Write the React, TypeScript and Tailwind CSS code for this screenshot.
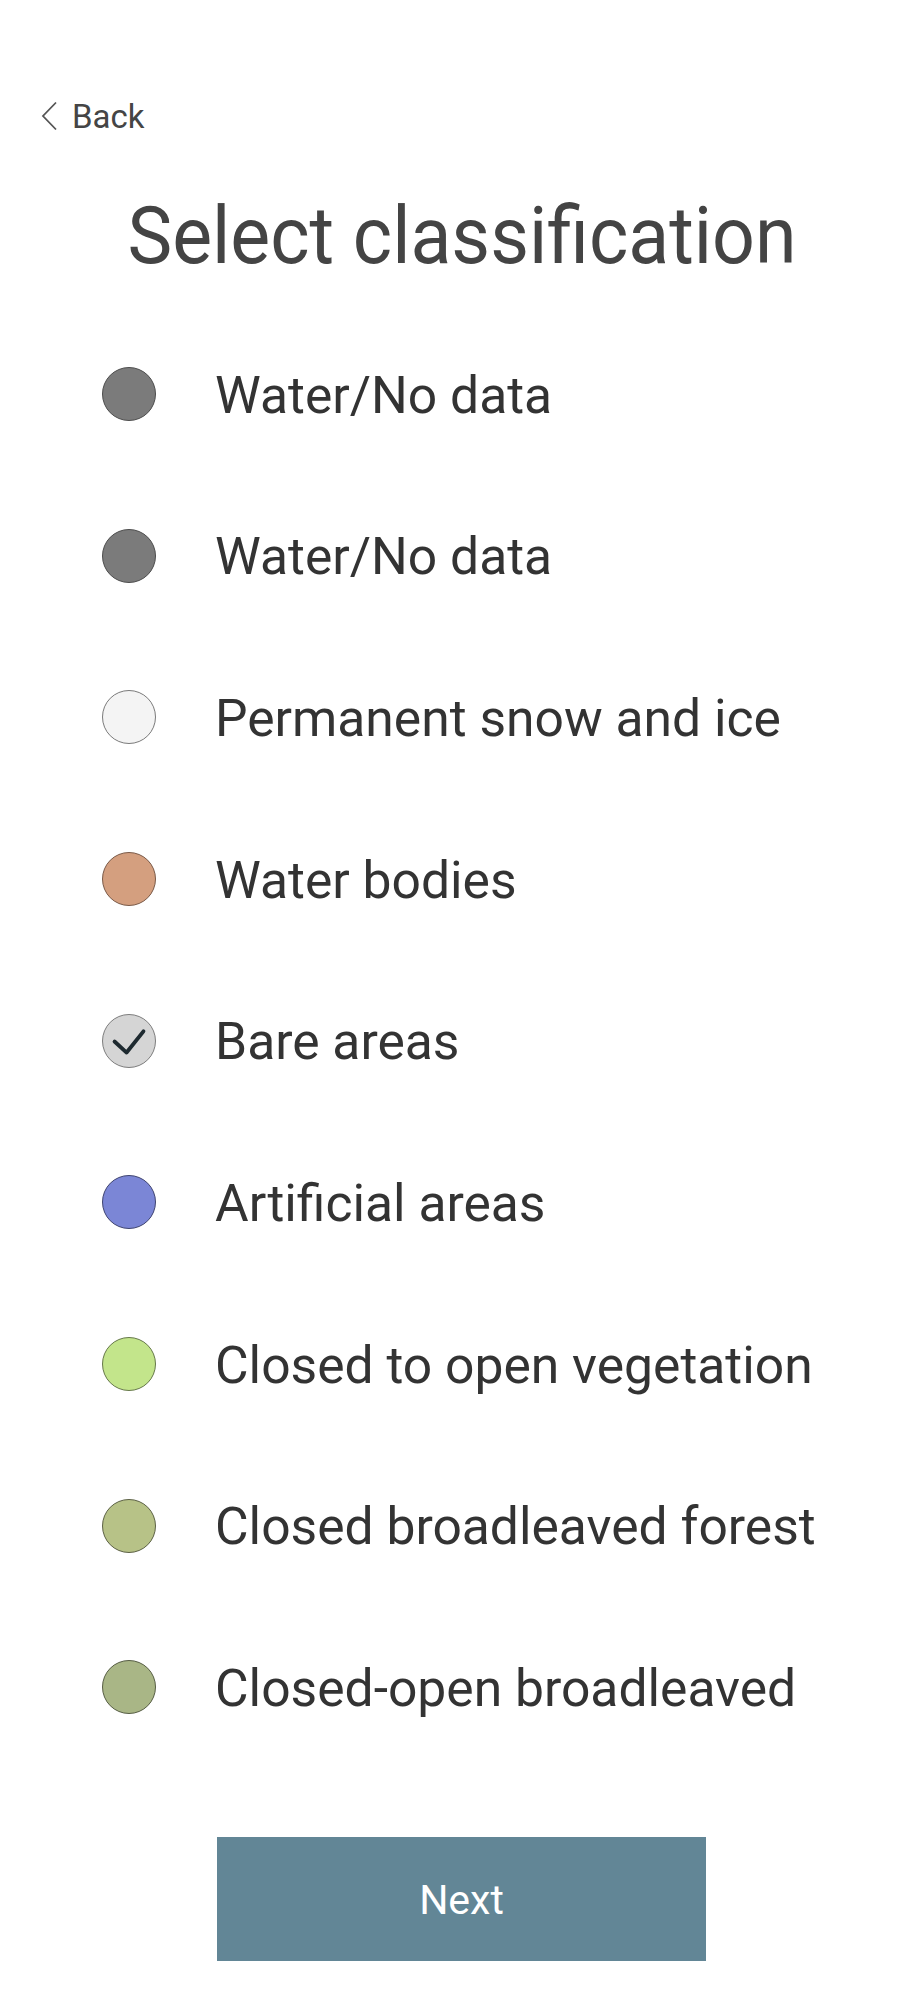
import { useState } from "react";

type Category = {
  id: string;
  label: string;
  fill: string;
  ring: string;
};

const categories: Category[] = [
  { id: "nodata-1", label: "Water/No data", fill: "bg-[#7b7b7b]", ring: "border-[#4d4d4d]" },
  { id: "nodata-2", label: "Water/No data", fill: "bg-[#7b7b7b]", ring: "border-[#4d4d4d]" },
  { id: "snow", label: "Permanent snow and ice", fill: "bg-[#f4f4f4]", ring: "border-[#7a7a7a]" },
  { id: "water", label: "Water bodies", fill: "bg-[#d49f7f]", ring: "border-[#7a5a48]" },
  { id: "bare", label: "Bare areas", fill: "bg-[#d5d5d5]", ring: "border-[#7d7d7d]" },
  { id: "artificial", label: "Artificial areas", fill: "bg-[#7b86d6]", ring: "border-[#3f4470]" },
  { id: "vegetation", label: "Closed to open vegetation", fill: "bg-[#c3e58b]", ring: "border-[#66784a]" },
  { id: "forest", label: "Closed broadleaved forest", fill: "bg-[#b7c287]", ring: "border-[#5c6145]" },
  { id: "open-forest", label: "Closed-open broadleaved", fill: "bg-[#a9b686]", ring: "border-[#565d44]" },
];

export default function App() {
  const [selected, setSelected] = useState("bare");

  return (
    <div className="min-h-screen w-full bg-white font-['Roboto','Liberation_Sans',sans-serif]">
      {/* Back link */}
      <button className="mt-[98px] ml-[41px] flex h-[36px] items-center gap-[14px] text-[#454545]">
        <svg width="17" height="30" viewBox="0 0 17 30" fill="none">
          <path d="M15 1.5 L2 15 L15 28.5" stroke="#555" strokeWidth="1.8" />
        </svg>
        <span className="text-[33px] leading-none">Back</span>
      </button>

      {/* Heading */}
      <h1 className="mt-[54px] scale-x-[0.94] text-center text-[80px] leading-[96px] font-normal text-[#444]">
        Select classification
      </h1>

      {/* Classification list */}
      <ul className="mt-[29px]">
        {categories.map((cat) => (
          <li
            key={cat.id}
            onClick={() => setSelected(cat.id)}
            className="flex h-[161.7px] cursor-pointer items-center"
          >
            <span
              className={`ml-[102px] flex h-[54px] w-[54px] shrink-0 items-center justify-center rounded-full border-[1.5px] ${cat.fill} ${cat.ring}`}
            >
              {selected === cat.id && (
                <svg width="54" height="54" viewBox="0 0 54 54" fill="none">
                  <path
                    d="M12 27.5 L24.5 39 L42 17"
                    stroke="#1e2a30"
                    strokeWidth="4"
                    strokeLinecap="round"
                    strokeLinejoin="round"
                  />
                </svg>
              )}
            </span>
            <span className="ml-[59px] pt-[3px] text-[51.6px] leading-none text-[#333]">{cat.label}</span>
          </li>
        ))}
      </ul>

      {/* Next button */}
      <button className="mt-[69px] ml-[217px] flex h-[124px] w-[489px] items-center justify-center bg-[#628696] pt-[4px] text-[41px] text-white">
        Next
      </button>
    </div>
  );
}
